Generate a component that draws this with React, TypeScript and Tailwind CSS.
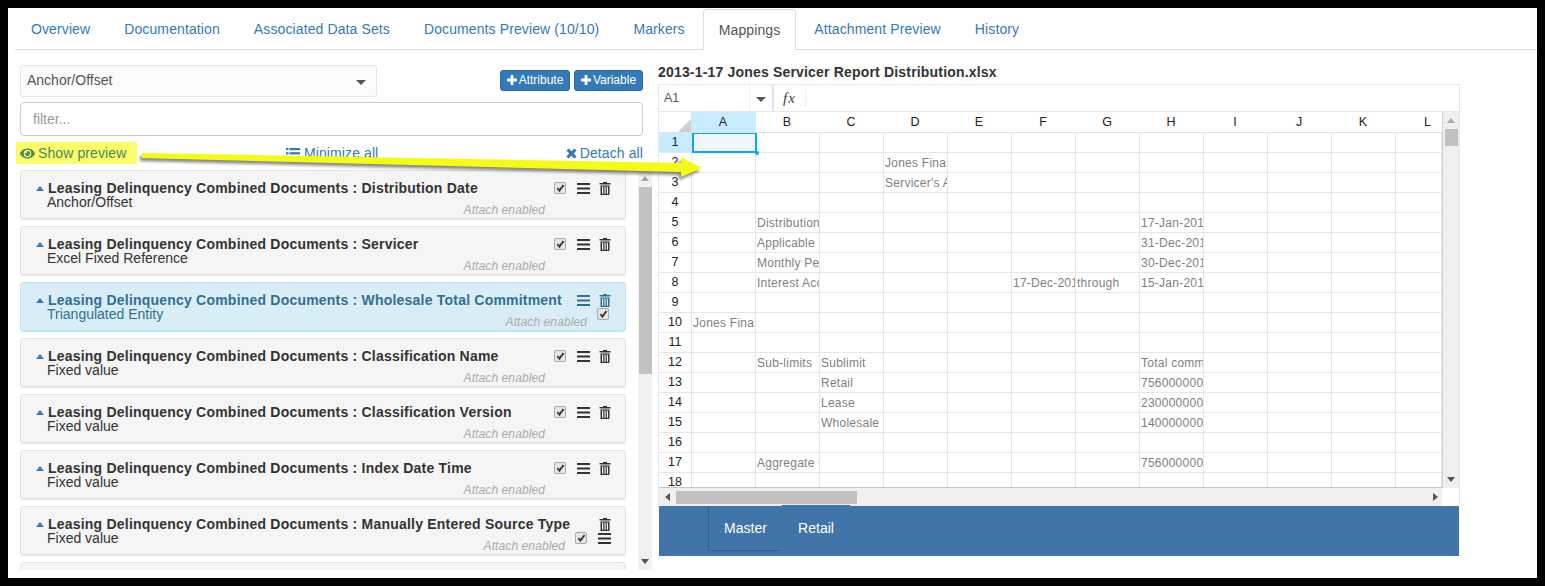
import { FaEye } from 'react-icons/fa'

const tabs = ['Overview', 'Documentation', 'Associated Data Sets', 'Documents Preview (10/10)', 'Markers', 'Mappings', 'Attachment Preview', 'History']
const prefix = 'Leasing Delinquency Combined Documents : '

type Mapping = { name: string; type: string; variant?: 'active' | 'long' }

const mappings: Mapping[] = [
  { name: 'Distribution Date', type: 'Anchor/Offset' },
  { name: 'Servicer', type: 'Excel Fixed Reference' },
  { name: 'Wholesale Total Commitment', type: 'Triangulated Entity', variant: 'active' },
  { name: 'Classification Name', type: 'Fixed value' },
  { name: 'Classification Version', type: 'Fixed value' },
  { name: 'Index Date Time', type: 'Fixed value' },
  { name: 'Manually Entered Source Type', type: 'Fixed value', variant: 'long' },
]

const columns = ['A', 'B', 'C', 'D', 'E', 'F', 'G', 'H', 'I', 'J', 'K', 'L']

const cells: Record<number, Record<string, string>> = {
  2: { D: 'Jones Financial' },
  3: { D: "Servicer's Account" },
  5: { B: 'Distribution Date', H: '17-Jan-2013' },
  6: { B: 'Applicable Period', H: '31-Dec-2012' },
  7: { B: 'Monthly Period', H: '30-Dec-2012' },
  8: { B: 'Interest Accrual', F: '17-Dec-2012', G: 'through', H: '15-Jan-2013' },
  10: { A: 'Jones Financial' },
  12: { B: 'Sub-limits', C: 'Sublimit', H: 'Total commitment' },
  13: { C: 'Retail', H: '756000000' },
  14: { C: 'Lease', H: '230000000' },
  15: { C: 'Wholesale', H: '140000000' },
  17: { B: 'Aggregate Commitment', H: '756000000' },
}

const rows = Array.from({ length: 18 }, (_, i) => i + 1)

function Trash() {
  return (
    <svg width="12" height="13" viewBox="0 0 12 13" fill="currentColor" className="shrink-0">
      <path d="M4 0h4v1h3.5v1.6H.5V1H4z" />
      <path fillRule="evenodd" d="M1.5 3.4h9V13h-9zM3 4.6v7.2h1.2V4.6zm2.4 0v7.2h1.2V4.6zm2.4 0v7.2H9V4.6z" />
    </svg>
  )
}

function Menu() {
  return (
    <svg width="13" height="11" viewBox="0 0 13 11" fill="currentColor" className="shrink-0">
      <rect width="13" height="2" />
      <rect y="4.5" width="13" height="2" />
      <rect y="9" width="13" height="2" />
    </svg>
  )
}

function Check() {
  return (
    <span className="flex h-[12px] w-[12px] shrink-0 items-center justify-center rounded-[2px] border border-[#a9a9a9] bg-[#e6e6e6]">
      <svg width="9" height="8" viewBox="0 0 9 8" fill="none" stroke="#3c3c3c" strokeWidth="2">
        <path d="M1.5 4.2 3.4 6.6 7.6 1" />
      </svg>
    </span>
  )
}

function Plus() {
  return (
    <svg width="10" height="10" viewBox="0 0 10 10" fill="currentColor">
      <path d="M3.6 0h2.8v3.6H10v2.8H6.4V10H3.6V6.4H0V3.6h3.6z" />
    </svg>
  )
}

function Triangle({ dir, color = '#555' }: { dir: 'up' | 'down' | 'left' | 'right'; color?: string }) {
  const points = { up: '0,5 4,0 8,5', down: '0,0 8,0 4,5', left: '5,0 5,8 0,4', right: '0,0 0,8 5,4' }[dir]
  const wide = dir === 'up' || dir === 'down'
  return (
    <svg width={wide ? 8 : 5} height={wide ? 5 : 8} viewBox={wide ? '0 0 8 5' : '0 0 5 8'} fill={color} className="shrink-0">
      <polygon points={points} />
    </svg>
  )
}

function Caret() {
  return (
    <svg width="10" height="5" viewBox="0 0 10 5" fill="#555" className="mt-[3px] shrink-0">
      <polygon points="0,0 10,0 5,5" />
    </svg>
  )
}

function MappingCard({ item }: { item: Mapping }) {
  const active = item.variant === 'active'
  const long = item.variant === 'long'
  const attachPad = active ? 'pr-[24px]' : long ? 'pr-[46px]' : 'pr-[66px]'

  return (
    <div
      className={`h-[50px] shrink-0 rounded-[4px] border border-b-2 pl-[15px] pr-[14px] pt-[10px] ${
        active ? 'border-[#bce8f1] bg-[#d9edf7] text-[#31708f]' : 'border-[#e3e3e3] bg-[#f5f5f5] text-[#333]'
      }`}
    >
      <div className="flex h-[14px] items-center">
        <span className="mr-[4px]">
          <Triangle dir="up" color="#337ab7" />
        </span>
        <span className="whitespace-nowrap text-[14px] font-bold tracking-[0.21px]">
          {prefix}
          {item.name}
        </span>
        <span className="ml-auto flex items-center">
          {!active && !long && <Check />}
          {!long && (
            <span className="ml-[11px]">
              <Menu />
            </span>
          )}
          <span className="ml-[9px]">
            <Trash />
          </span>
        </span>
      </div>
      <div className="flex h-[14px] items-center pl-[11px]">
        <span className="text-[14px]">{item.type}</span>
        {active && (
          <span className="ml-auto mr-[2px]">
            <Check />
          </span>
        )}
        {long && (
          <span className="ml-auto flex items-center">
            <Check />
            <span className="ml-[11px] text-[#333]">
              <Menu />
            </span>
          </span>
        )}
      </div>
      <div className={`-mt-[6px] flex h-[14px] items-center justify-end text-[12px] italic tracking-[0.1px] text-[#aaa] ${attachPad}`}>
        Attach enabled
      </div>
    </div>
  )
}

function LeftPanel() {
  return (
    <div className="ml-[12px] w-[632px] shrink-0 pt-[15px]">
      <div className="flex w-[623px] items-center justify-between">
        <div className="flex h-[32px] w-[357px] items-center justify-between rounded-[3px] border border-[#e5e5e5] bg-[#fbfbfb] pb-[1px] pl-[6px] pr-[10px] text-[14px] text-[#555]">
          Anchor/Offset
          <Caret />
        </div>
        <div className="-mt-[1px] flex gap-[4px] text-[12px] text-white">
          <button className="flex h-[21px] w-[70px] items-center justify-center gap-[2px] rounded-[3px] border border-[#2e6da4] bg-[#337ab7] pb-[1px]">
            <Plus />
            Attribute
          </button>
          <button className="flex h-[21px] w-[69px] items-center justify-center gap-[2px] rounded-[3px] border border-[#2e6da4] bg-[#337ab7] pb-[1px]">
            <Plus />
            Variable
          </button>
        </div>
      </div>
      <input
        placeholder="filter..."
        className="mt-[5px] block h-[34px] w-[623px] rounded-[4px] border border-[#ccc] bg-white px-[12px] text-[14px] placeholder:text-[#999]"
      />
      <div className="mt-[6px] flex h-[22px] w-[623px] items-center text-[14px] tracking-[0.1px] text-[#337ab7]">
        <span className="-ml-[4px] flex h-[22px] w-[121px] items-center gap-[3px] bg-[#fbfc6a] pl-[4px] text-[#4a8a5e]">
          <FaEye className="h-[15px] w-[15px]" />
          Show preview
        </span>
        <span className="ml-[149px] flex items-center gap-[4px]">
          <svg width="14" height="11" viewBox="0 0 14 11" fill="currentColor">
            <rect width="2.5" height="2.2" />
            <rect x="3.5" width="10.5" height="2.2" />
            <rect y="4.2" width="2.5" height="2.2" />
            <rect x="3.5" y="4.2" width="10.5" height="2.2" />
            <rect y="8.4" width="2.5" height="2.2" />
            <rect x="3.5" y="8.4" width="10.5" height="2.2" />
          </svg>
          Minimize all
        </span>
        <span className="ml-auto flex items-center gap-[3px]">
          <svg width="11" height="11" viewBox="0 0 11 11" fill="currentColor">
            <path d="M2.6 0.4 5.5 3.3 8.4 0.4 10.6 2.6 7.7 5.5 10.6 8.4 8.4 10.6 5.5 7.7 2.6 10.6 0.4 8.4 3.3 5.5 0.4 2.6z" />
          </svg>
          Detach all
        </span>
      </div>
      <div className="mt-[6px] flex h-[400px]">
        <div className="flex w-[606px] flex-col gap-[6px] overflow-hidden">
          {mappings.map((item) => (
            <MappingCard key={item.name} item={item} />
          ))}
          <div className="h-[50px] shrink-0 rounded-[4px] border border-[#e3e3e3] bg-[#f5f5f5]" />
        </div>
        <div className="ml-[12px] flex w-[14px] flex-col items-center bg-[#f1f1f1]">
          <div className="flex h-[17px] items-center justify-center">
            <Triangle dir="up" color="#a3a3a3" />
          </div>
          <div className="h-[187px] w-[13px] bg-[#c1c1c1]" />
          <div className="mt-auto flex h-[17px] items-center justify-center">
            <Triangle dir="down" color="#505050" />
          </div>
        </div>
      </div>
    </div>
  )
}

function Sheet() {
  return (
    <div className="w-[802px] border-x border-t border-[#e6e6e6] bg-white text-[12px]">
      <div className="flex h-[27px] items-center border-b border-[#e6e6e6]">
        <div className="flex h-full w-[91px] items-center border-r border-[#efefef] pl-[5px] text-[12.5px] text-[#555]">A1</div>
        <div className="flex h-full w-[24px] items-center justify-center border-r-2 border-[#e2e2e2]">
          <Caret />
        </div>
        <div className="flex h-[18px] w-[32px] items-center justify-center border-r border-[#eee] font-['Liberation_Serif',serif] text-[15px] italic tracking-[1px] text-[#444]">
          fx
        </div>
      </div>
      <div className="flex">
        <div className="w-[783px] shrink-0">
          <div className="flex h-[21px] border-b border-[#e3e3e3] text-[12.5px] text-[#222]">
            <div className="flex w-[33px] shrink-0 items-end justify-end border-r border-[#e3e3e3]">
              <svg width="13" height="13" viewBox="0 0 13 13" fill="#cfcfcf">
                <polygon points="13,0 13,13 0,13" />
              </svg>
            </div>
            {columns.map((c) => (
              <div
                key={c}
                className={`flex shrink-0 items-center ${c === 'L' ? 'w-[46px] justify-end pr-[11px]' : 'w-[64px] justify-center pr-[2px]'} ${c === 'A' ? 'bg-[#c7ebff]' : ''}`}
              >
                {c}
              </div>
            ))}
          </div>
          <div className="relative h-[355px] overflow-hidden border-b border-[#c9c9c9]">
            {rows.map((r) => (
              <div key={r} className="flex h-[20px] border-b border-[#e6e6e6]">
                <div
                  className={`flex w-[33px] shrink-0 items-center justify-center border-r border-[#e3e3e3] text-[12.5px] text-[#222] ${r === 1 ? 'bg-[#c7ebff]' : ''}`}
                >
                  {r}
                </div>
                {columns.map((c) => (
                  <div
                    key={c}
                    className={`flex shrink-0 items-center overflow-hidden whitespace-nowrap border-r border-[#e6e6e6] pl-[1px] pt-[1px] tracking-[0.25px] text-[#7f7f7f] ${c === 'L' ? 'w-[46px]' : 'w-[64px]'}`}
                  >
                    {cells[r]?.[c]}
                  </div>
                ))}
              </div>
            ))}
            <div className="absolute left-[33px] top-0 h-[21px] w-[65px] -translate-y-px border-2 border-[#0af] bg-[#f0f8fe]" />
            <div className="absolute left-[96px] top-[18px] h-[4px] w-[4px] rounded-full bg-[#0af]" />
          </div>
          <div className="flex h-[18px] items-center bg-[#efefef]">
            <div className="flex w-[17px] shrink-0 justify-center">
              <Triangle dir="left" />
            </div>
            <div className="h-[13px] w-[181px] bg-[#bfbfbf]" />
            <div className="ml-auto flex w-[14px] justify-center">
              <Triangle dir="right" />
            </div>
          </div>
        </div>
        <div className="flex-1">
          <div className="flex h-[376px] w-full flex-col items-center border-l border-[#d0d0d0] bg-[#efefef]">
            <div className="flex h-[17px] items-center">
              <Triangle dir="up" color="#aaa" />
            </div>
            <div className="h-[17px] w-[13px] bg-[#bfbfbf]" />
            <div className="mt-auto flex h-[17px] items-center">
              <Triangle dir="down" />
            </div>
          </div>
        </div>
      </div>
    </div>
  )
}

function RightPanel() {
  return (
    <div className="ml-[6px] pt-[15px]">
      <div className="h-[19px] text-[14px] font-bold leading-[14px] tracking-[0.18px] text-[#333]">
        2013-1-17 Jones Servicer Report Distribution.xlsx
      </div>
      <Sheet />
      <div className="ml-px flex h-[50px] w-[800px] bg-[#4174a8] pl-[49px] text-[14px] text-white">
        <div className="flex h-[45px] w-[74px] items-center justify-center border-b border-l border-[#2f6290]">Master</div>
        <div className="-mt-px flex h-[46px] w-[68px] items-center justify-center bg-[#4174a8]">Retail</div>
      </div>
    </div>
  )
}

export default function App() {
  return (
    <div className="relative h-[586px] w-[1545px] overflow-hidden bg-black p-[8px] font-['Liberation_Sans',Arial,sans-serif]">
      <div className="h-[570px] w-[1529px] bg-white">
        <div className="ml-[7px] flex h-[42px] border-b border-[#ddd] pt-px text-[14px] tracking-[0.11px]">
          {tabs.map((t) =>
            t === 'Mappings' ? (
              <div
                key={t}
                className="relative z-10 mr-[2px] flex h-[41px] items-center rounded-t-[4px] border border-b-0 border-[#ddd] bg-white px-[15px] text-[#555]"
              >
                {t}
              </div>
            ) : (
              <div key={t} className="mr-[2px] flex h-[40px] items-center border border-transparent px-[15px] text-[#337ab7]">
                {t}
              </div>
            ),
          )}
        </div>
        <div className="flex">
          <LeftPanel />
          <RightPanel />
        </div>
      </div>
      <svg className="pointer-events-none absolute left-0 top-0" width="1545" height="586">
        <defs>
          <filter id="arrow-shadow" x="-5%" y="-50%" width="110%" height="200%">
            <feGaussianBlur stdDeviation="1.5" />
          </filter>
        </defs>
        <polygon
          points="142,153 681,163 681,157 702,168 681,177 681,172 142,158"
          fill="#555"
          opacity="0.7"
          transform="translate(-2 3)"
          filter="url(#arrow-shadow)"
        />
        <polygon points="142,153 681,163 681,157 702,168 681,177 681,172 142,158" fill="#f4fb14" />
      </svg>
    </div>
  )
}
